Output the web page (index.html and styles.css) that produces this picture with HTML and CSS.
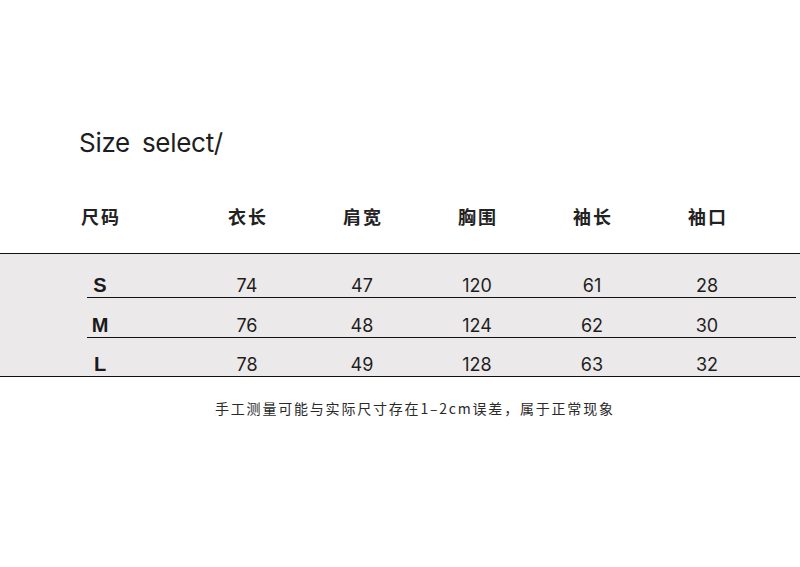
FILE: index.html
```html
<!DOCTYPE html>
<html lang="zh-CN">
<head>
<meta charset="utf-8">
<title>Size select</title>
<link rel="stylesheet" href="styles.css">
</head>
<body>
<main class="page">
  <h1 class="title">Size&nbsp; select/</h1>
  <div class="grid head">
    <div class="cell">尺码</div>
    <div class="cell">衣长</div>
    <div class="cell">肩宽</div>
    <div class="cell">胸围</div>
    <div class="cell">袖长</div>
    <div class="cell">袖口</div>
  </div>
  <section class="band">
    <div class="grid row row-1 lined">
      <div class="cell size">S</div>
      <div class="cell">74</div>
      <div class="cell">47</div>
      <div class="cell">120</div>
      <div class="cell">61</div>
      <div class="cell">28</div>
    </div>
    <div class="grid row row-2 lined">
      <div class="cell size">M</div>
      <div class="cell">76</div>
      <div class="cell">48</div>
      <div class="cell">124</div>
      <div class="cell">62</div>
      <div class="cell">30</div>
    </div>
    <div class="grid row row-3">
      <div class="cell size">L</div>
      <div class="cell">78</div>
      <div class="cell">49</div>
      <div class="cell">128</div>
      <div class="cell">63</div>
      <div class="cell">32</div>
    </div>
  </section>
  <p class="note">手工测量可能与实际尺寸存在1–2cm误差，属于正常现象</p>
</main>
</body>
</html>
```

FILE: styles.css
```css
html, body {
  margin: 0;
  padding: 0;
  background: #ffffff;
}

.page {
  width: 800px;
  height: 567px;
  overflow: hidden;
  color: #1c1c1c;
}

.title {
  margin: 128px 0 0 0;
  padding-left: 79px;
  font-family: Inter, "Noto Sans", sans-serif;
  font-weight: 400;
  font-size: 26px;
  line-height: 30px;
  letter-spacing: -0.3px;
  word-spacing: -1px;
  color: #1e1e1e;
}

.grid {
  display: grid;
  grid-template-columns: 179px repeat(5, 115px);
  padding-left: 10.5px;
}

.cell {
  text-align: center;
}

.head {
  margin-top: 46px;
  font-family: "Noto Sans CJK SC", sans-serif;
  font-weight: 700;
  font-size: 18px;
  line-height: 24px;
  color: #222;
}

.head .cell {
  letter-spacing: 2px;
  padding-left: 2px;
}

.band {
  margin-top: 25px;
  background: #ece9ea;
  border-top: 1px solid #111;
  border-bottom: 1px solid #111;
}

.row {
  align-items: end;
  font-family: Inter, "Noto Sans", sans-serif;
  font-size: 18px;
  line-height: 18px;
  color: #1e1e1e;
  box-sizing: border-box;
  padding-bottom: 2px;
}

.lined {
  background: linear-gradient(#111, #111) no-repeat 87px 100% / 709px 1px;
}

.row-1 { height: 44px; padding-bottom: 3px; }
.row-2 { height: 40px; padding-bottom: 3px; }
.row-3 { height: 38px; padding-bottom: 2px; }

.size {
  font-family: "Liberation Sans", Arial, sans-serif;
  font-weight: 700;
  font-size: 20px;
  line-height: 20px;
  color: #1a1a1a;
}

.note {
  margin: 21px 0 0 0;
  padding-left: 215px;
  font-family: "Noto Sans CJK SC", sans-serif;
  font-size: 14px;
  line-height: 20px;
  letter-spacing: 1.8px;
  color: #2a2a2a;
}
```
